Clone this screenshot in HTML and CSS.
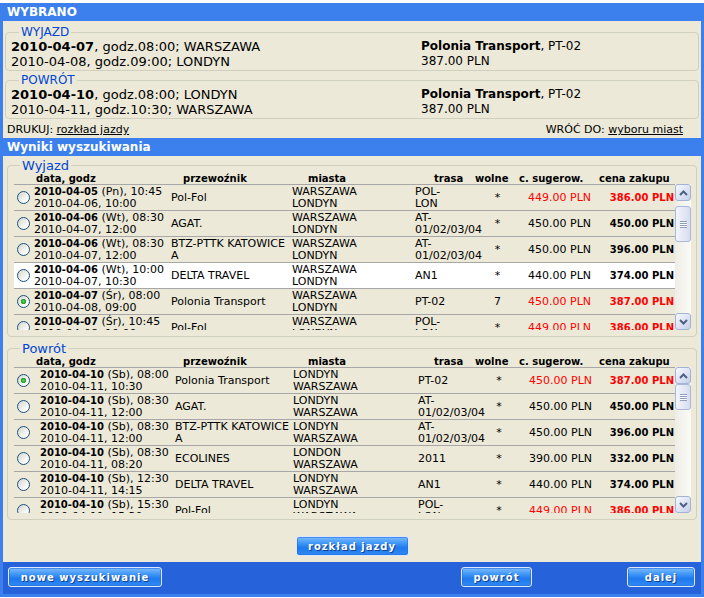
FILE: index.html
```html
<!DOCTYPE html>
<html lang="pl">
<head>
<meta charset="utf-8">
<title>Wybrano</title>
<link rel="stylesheet" href="styles.css">
</head>
<body>
<div class="frame">
  <div class="bar">WYBRANO</div>
  <div class="sel-panel">
    <fieldset class="sel first">
      <legend>WYJAZD</legend>
      <div class="sel-grid">
        <div class="sel-left"><b>2010-04-07</b>, godz.08:00; WARSZAWA<br>2010-04-08, godz.09:00; LONDYN</div>
        <div class="sel-right"><b>Polonia Transport</b>, PT-02<br>387.00 PLN</div>
      </div>
    </fieldset>
    <fieldset class="sel second">
      <legend>POWRÓT</legend>
      <div class="sel-grid">
        <div class="sel-left"><b>2010-04-10</b>, godz.08:00; LONDYN<br>2010-04-11, godz.10:30; WARSZAWA</div>
        <div class="sel-right"><b>Polonia Transport</b>, PT-02<br>387.00 PLN</div>
      </div>
    </fieldset>
    <div class="links">
      <span>DRUKUJ: <a href="#">rozkład jazdy</a></span>
      <span>WRÓĆ DO: <a href="#">wyboru miast</a></span>
    </div>
  </div>
  <div class="bar">Wyniki wyszukiwania</div>
  <div class="res-panel">
    <fieldset class="res first">
      <legend>Wyjazd</legend>
      <div class="thead">
        <span></span><span>data, godz</span><span>przewoźnik</span><span>miasta</span><span>trasa</span><span>wolne</span><span>c. sugerow.</span><span>cena zakupu</span>
      </div>
      <div class="listwrap">
        <div class="list list-a">
          <label class="row"><input class="radio" type="radio" name="wyj"><span class="c-date"><b>2010-04-05</b> (Pn), 10:45<br>2010-04-06, 10:00</span><span class="c-car">Pol-Fol</span><span class="c-city">WARSZAWA<br>LONDYN</span><span class="c-tr">POL-<br>LON</span><span class="c-free">*</span><span class="c-sug red">449.00 PLN</span><span class="c-price red">386.00 PLN</span></label>
          <label class="row"><input class="radio" type="radio" name="wyj"><span class="c-date"><b>2010-04-06</b> (Wt), 08:30<br>2010-04-07, 12:00</span><span class="c-car">AGAT.</span><span class="c-city">WARSZAWA<br>LONDYN</span><span class="c-tr">AT-<br>01/02/03/04</span><span class="c-free">*</span><span class="c-sug">450.00 PLN</span><span class="c-price">450.00 PLN</span></label>
          <label class="row"><input class="radio" type="radio" name="wyj"><span class="c-date"><b>2010-04-06</b> (Wt), 08:30<br>2010-04-07, 12:00</span><span class="c-car">BTZ-PTTK KATOWICE A</span><span class="c-city">WARSZAWA<br>LONDYN</span><span class="c-tr">AT-<br>01/02/03/04</span><span class="c-free">*</span><span class="c-sug">450.00 PLN</span><span class="c-price">396.00 PLN</span></label>
          <label class="row hover"><input class="radio" type="radio" name="wyj"><span class="c-date"><b>2010-04-06</b> (Wt), 10:00<br>2010-04-07, 10:30</span><span class="c-car">DELTA TRAVEL</span><span class="c-city">WARSZAWA<br>LONDYN</span><span class="c-tr">AN1</span><span class="c-free">*</span><span class="c-sug">440.00 PLN</span><span class="c-price">374.00 PLN</span></label>
          <label class="row"><input class="radio" type="radio" name="wyj" checked><span class="c-date"><b>2010-04-07</b> (Śr), 08:00<br>2010-04-08, 09:00</span><span class="c-car">Polonia Transport</span><span class="c-city">WARSZAWA<br>LONDYN</span><span class="c-tr">PT-02</span><span class="c-free">7</span><span class="c-sug red">450.00 PLN</span><span class="c-price red">387.00 PLN</span></label>
          <label class="row"><input class="radio" type="radio" name="wyj"><span class="c-date"><b>2010-04-07</b> (Śr), 10:45<br>2010-04-08, 10:00</span><span class="c-car">Pol-Fol</span><span class="c-city">WARSZAWA<br>LONDYN</span><span class="c-tr">POL-<br>LON</span><span class="c-free">*</span><span class="c-sug red">449.00 PLN</span><span class="c-price red">386.00 PLN</span></label>
        </div>
        <div class="sbar">
          <div class="sb-btn"><svg width="9" height="6" viewBox="0 0 9 6"><path d="M1 5 L4.5 1.5 L8 5" fill="none" stroke="#4d6185" stroke-width="2"/></svg></div>
          <div class="sb-track a"><div class="sb-thumb a"><span class="grip"></span></div></div>
          <div class="sb-btn"><svg width="9" height="6" viewBox="0 0 9 6"><path d="M1 1 L4.5 4.5 L8 1" fill="none" stroke="#4d6185" stroke-width="2"/></svg></div>
        </div>
      </div>
    </fieldset>
    <fieldset class="res second">
      <legend>Powrót</legend>
      <div class="thead">
        <span></span><span>data, godz</span><span>przewoźnik</span><span>miasta</span><span>trasa</span><span>wolne</span><span>c. sugerow.</span><span>cena zakupu</span>
      </div>
      <div class="listwrap">
        <div class="list list-b">
          <label class="row"><input class="radio" type="radio" name="pow" checked><span class="c-date"><b>2010-04-10</b> (Sb), 08:00<br>2010-04-11, 10:30</span><span class="c-car">Polonia Transport</span><span class="c-city">LONDYN<br>WARSZAWA</span><span class="c-tr">PT-02</span><span class="c-free">*</span><span class="c-sug red">450.00 PLN</span><span class="c-price red">387.00 PLN</span></label>
          <label class="row"><input class="radio" type="radio" name="pow"><span class="c-date"><b>2010-04-10</b> (Sb), 08:30<br>2010-04-11, 12:00</span><span class="c-car">AGAT.</span><span class="c-city">LONDYN<br>WARSZAWA</span><span class="c-tr">AT-<br>01/02/03/04</span><span class="c-free">*</span><span class="c-sug">450.00 PLN</span><span class="c-price">450.00 PLN</span></label>
          <label class="row"><input class="radio" type="radio" name="pow"><span class="c-date"><b>2010-04-10</b> (Sb), 08:30<br>2010-04-11, 12:00</span><span class="c-car">BTZ-PTTK KATOWICE A</span><span class="c-city">LONDYN<br>WARSZAWA</span><span class="c-tr">AT-<br>01/02/03/04</span><span class="c-free">*</span><span class="c-sug">450.00 PLN</span><span class="c-price">396.00 PLN</span></label>
          <label class="row"><input class="radio" type="radio" name="pow"><span class="c-date"><b>2010-04-10</b> (Sb), 08:30<br>2010-04-11, 08:20</span><span class="c-car">ECOLINES</span><span class="c-city">LONDON<br>WARSZAWA</span><span class="c-tr">2011</span><span class="c-free">*</span><span class="c-sug">390.00 PLN</span><span class="c-price">332.00 PLN</span></label>
          <label class="row"><input class="radio" type="radio" name="pow"><span class="c-date"><b>2010-04-10</b> (Sb), 12:30<br>2010-04-11, 14:15</span><span class="c-car">DELTA TRAVEL</span><span class="c-city">LONDYN<br>WARSZAWA</span><span class="c-tr">AN1</span><span class="c-free">*</span><span class="c-sug">440.00 PLN</span><span class="c-price">374.00 PLN</span></label>
          <label class="row"><input class="radio" type="radio" name="pow"><span class="c-date"><b>2010-04-10</b> (Sb), 15:30<br>2010-04-11, 15:30</span><span class="c-car">Pol-Fol</span><span class="c-city">LONDYN<br>WARSZAWA</span><span class="c-tr">POL-<br>LON</span><span class="c-free">*</span><span class="c-sug red">449.00 PLN</span><span class="c-price red">386.00 PLN</span></label>
        </div>
        <div class="sbar">
          <div class="sb-btn"><svg width="9" height="6" viewBox="0 0 9 6"><path d="M1 5 L4.5 1.5 L8 5" fill="none" stroke="#4d6185" stroke-width="2"/></svg></div>
          <div class="sb-track b"><div class="sb-thumb b"><span class="grip"></span></div></div>
          <div class="sb-btn"><svg width="9" height="6" viewBox="0 0 9 6"><path d="M1 1 L4.5 4.5 L8 1" fill="none" stroke="#4d6185" stroke-width="2"/></svg></div>
        </div>
      </div>
    </fieldset>
    <div class="btnrow"><button class="btn w-rozklad" type="button">rozkład jazdy</button></div>
  </div>
  <div class="foot">
    <button class="btn w-nowe" type="button">nowe wyszukiwanie</button>
    <button class="btn w-powrot" type="button">powrót</button>
    <button class="btn w-dalej" type="button">dalej</button>
  </div>
</div>
</body>
</html>
```

FILE: styles.css
```css
* { box-sizing: border-box; }
html, body { margin: 0; padding: 0; background: #fff; }
body { font-family: "DejaVu Sans", Verdana, sans-serif; color: #000; }

.frame {
  width: 704px;
  margin-top: 3px;
  border: 3px solid #3b80ec;
  border-top: 0;
  background: #ece9d8;
}

.bar {
  height: 18px;
  line-height: 18px;
  background: #3b80ec;
  color: #fff;
  font-weight: bold;
  font-size: 12px;
  padding-left: 4px;
}

/* selected panel */
.sel-panel { padding: 0 2px; }
fieldset { min-width: 0; }
fieldset.sel {
  margin: 4px 0 0;
  padding: 0 5px 1px;
  border: 1px solid #d0d0bf;
  border-radius: 4px;
}
fieldset.sel.second { margin-top: 2px; }
fieldset.sel legend {
  margin-left: 8px;
  padding: 0 2px;
  font-size: 12px;
  line-height: 14px;
  color: #0046d5;
}
.sel-grid { display: grid; grid-template-columns: 410px 1fr; }
.sel-left { font-size: 13px; line-height: 15px; }
.sel-right { font-size: 12px; line-height: 15px; }

.links {
  display: flex;
  justify-content: space-between;
  font-size: 11px;
  line-height: 13px;
  padding: 4px 16px 2px 2px;
  color: #000;
}
.links a { color: #000; text-decoration: underline; }

/* results */
.res-panel { padding: 0 4px; }
fieldset.res {
  margin: 2px 0 0;
  padding: 0 5px 6px 6px;
  border: 1px solid #d0d0bf;
  border-radius: 4px;
}
fieldset.res.second { margin-top: 4px; }
fieldset.res legend {
  margin-left: 6px;
  padding: 0 2px;
  font-size: 13px;
  line-height: 15px;
  color: #0046d5;
}

.thead {
  display: grid;
  grid-template-columns: 22px 147px 125px 126px 41px 44px 80px 1fr;
  height: 11px;
  font-size: 10px;
  line-height: 11px;
  font-weight: bold;
  white-space: nowrap;
}

.listwrap { display: flex; height: 146px; }
.list { width: 661px; height: 146px; overflow: hidden; }
.row {
  display: grid;
  height: 26px;
  border-top: 1px solid #a7a7a7;
  align-items: center;
  font-size: 11px;
  line-height: 12px;
}
.list-a .row { grid-template-columns: 20px 137px 121px 123px 65px 35px 80px 80px; }
.list-b .row { grid-template-columns: 26px 135px 118px 125px 64px 34px 80px 79px; }
.row.hover { background: #fff; }
.row b { font-size: 10px; }

.radio {
  appearance: none;
  -webkit-appearance: none;
  width: 13px;
  height: 13px;
  margin: 0 0 0 3px;
  border: 1px solid #1c5180;
  border-radius: 50%;
  background: linear-gradient(135deg, #d4d4cc, #ffffff 80%);
}
.radio:checked {
  background:
    radial-gradient(circle at 50% 50%, #5ad35a 0, #21a121 2.4px, transparent 3px),
    linear-gradient(135deg, #d4d4cc, #ffffff 80%);
}

.c-date, .c-city, .c-tr { white-space: nowrap; }
.c-free { text-align: center; }
.c-sug { text-align: right; padding-right: 4px; white-space: nowrap; }
.c-price { text-align: right; padding-right: 1px; font-weight: bold; font-size: 10px; white-space: nowrap; }
.red { color: #ff0000; }

/* scrollbar */
.sbar {
  width: 16px;
  height: 146px;
  display: flex;
  flex-direction: column;
  background: linear-gradient(to right, #eeede5, #fbfbf8);
}
.sb-btn {
  flex: none;
  height: 17px;
  border: 1px solid #a3b3d3;
  border-radius: 3px;
  background: linear-gradient(135deg, #f7f9fe, #c5d0ea);
  display: flex;
  align-items: center;
  justify-content: center;
}
.sb-track { flex: 1; }
.sb-track.a { padding-top: 5px; }
.sb-track.b { padding-top: 0; }
.sb-thumb {
  border: 1px solid #a9b8d9;
  border-radius: 3px;
  background: linear-gradient(to right, #f3f5fb, #d5ddef);
  display: flex;
  align-items: center;
  justify-content: center;
}
.sb-thumb.a { height: 36px; }
.sb-thumb.b { height: 26px; }
.grip {
  width: 7px;
  height: 7px;
  background: repeating-linear-gradient(to bottom, #8f9dbf 0 1px, #ffffff 1px 2px);
}

/* buttons */
.btn {
  height: 20px;
  padding: 0;
  border: 1px solid #dbe8ff;
  border-radius: 3px;
  background: linear-gradient(to bottom, #7cbcff 0%, #3f96f7 35%, #1f79ed 60%, #2f8af3 100%);
  box-shadow: inset 0 0 0 1px rgba(40, 110, 220, 0.6);
  color: #fff;
  font-family: "DejaVu Sans", Verdana, sans-serif;
  font-size: 10px;
  font-weight: bold;
  letter-spacing: 1px;
  text-shadow: 1px 1px 0 #123f8c;
  cursor: pointer;
}
.btnrow { display: flex; justify-content: center; padding: 16px 0 6px; }
.w-rozklad { width: 113px; }

.foot {
  display: flex;
  align-items: center;
  background: #2662d9;
  padding: 5px 6px 7px 5px;
}
.w-nowe { width: 154px; }
.w-powrot { width: 71px; margin-left: auto; margin-right: 95px; }
.w-dalej { width: 68px; }
```
